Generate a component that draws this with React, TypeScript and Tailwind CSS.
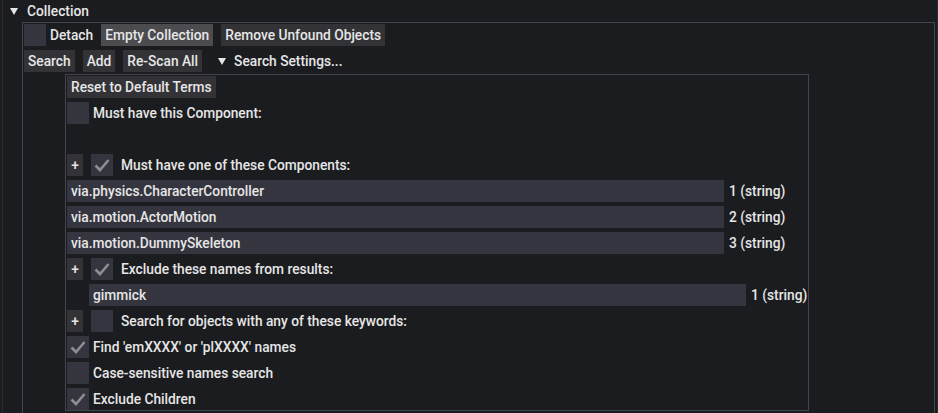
import React from 'react';

const FONT = { fontFamily: 'Roboto, "Noto Sans", "Liberation Sans", sans-serif' };

function Arrow() {
  return (
    <svg width="8" height="7" viewBox="0 0 8 7" className="shrink-0">
      <path d="M0 0 L8 0 L4 7 Z" fill="#e6e6e6" />
    </svg>
  );
}

function Check({ checked }: { checked?: boolean }) {
  return (
    <div className="w-[22px] h-[22px] bg-[#35353f] shrink-0 flex items-center justify-center">
      {checked && (
        <svg width="22" height="22" viewBox="0 0 22 22">
          <path d="M4.5 11.5 L9 16 L17.5 6" fill="none" stroke="#8d8d93" strokeWidth="2.6" />
        </svg>
      )}
    </div>
  );
}

function Btn({ children, active }: { children: React.ReactNode; active?: boolean }) {
  return (
    <div className={`h-[22px] px-[4px] flex items-center shrink-0 whitespace-nowrap ${active ? 'bg-[#4b4b50]' : 'bg-[#333337]'}`}>
      {children}
    </div>
  );
}

function CheckRow({ checked, label }: { checked?: boolean; label: string }) {
  return (
    <div className="flex items-center h-[22px] gap-[4px]">
      <Check checked={checked} />
      <span className="whitespace-nowrap">{label}</span>
    </div>
  );
}

function PlusRow({ checked, label }: { checked?: boolean; label: string }) {
  return (
    <div className="flex items-center h-[22px]">
      <div className="w-[16px] h-[22px] bg-[#333337] flex items-center justify-center">+</div>
      <div className="ml-[8px]"><Check checked={checked} /></div>
      <span className="ml-[8px] whitespace-nowrap">{label}</span>
    </div>
  );
}

function Field({ value, index, indent }: { value: string; index: number; indent?: boolean }) {
  return (
    <div className={`flex items-center h-[22px] ${indent ? 'ml-[22px]' : ''}`}>
      <div className="w-[657px] h-[22px] shrink-0 bg-[#35353f] px-[4px] flex items-center">{value}</div>
      <span className="ml-[5px] whitespace-nowrap">{index} (string)</span>
    </div>
  );
}

export default function App() {
  return (
    <div className="w-[938px] h-[413px] overflow-hidden bg-[#1b1c1f] text-[#e6e6e6] text-[13.75px] leading-[16px] font-medium relative" style={FONT}>
      <div className="absolute left-[2px] top-0 bottom-0 w-px bg-[#2a2a2f]" />
      <div className="absolute right-0 top-0 bottom-0 w-px bg-[#2a2a2f]" />

      {/* header */}
      <div className="h-[22px] flex items-center pl-[10px]">
        <Arrow />
        <span className="ml-[9px]">Collection</span>
      </div>

      {/* outer child */}
      <div className="ml-[22px] w-[913px] h-[400px] border border-[#44444c] p-px">
        <div className="flex items-center gap-[4px] h-[22px]">
          <Check />
          <span>Detach</span>
          <div className="ml-[4px] flex gap-[8px]">
            <Btn active>Empty Collection</Btn>
            <Btn>Remove Unfound Objects</Btn>
          </div>
        </div>
        <div className="flex items-center gap-[8px] h-[22px] mt-[4px]">
          <Btn>Search</Btn>
          <Btn>Add</Btn>
          <Btn>Re-Scan All</Btn>
          <div className="flex items-center ml-[8px]">
            <Arrow />
            <span className="ml-[8px]">Search Settings...</span>
          </div>
        </div>

        {/* inner child */}
        <div className="mt-[2px] ml-[41px] w-[744px] border border-[#44444c] p-px pb-0 flex flex-col gap-[4px]">
          <div className="flex"><Btn>Reset to Default Terms</Btn></div>
          <CheckRow label="Must have this Component:" />
          <div className="h-[22px]" />
          <PlusRow checked label="Must have one of these Components:" />
          <Field value="via.physics.CharacterController" index={1} />
          <Field value="via.motion.ActorMotion" index={2} />
          <Field value="via.motion.DummySkeleton" index={3} />
          <PlusRow checked label="Exclude these names from results:" />
          <Field value="gimmick" index={1} indent />
          <PlusRow label="Search for objects with any of these keywords:" />
          <CheckRow checked label="Find 'emXXXX' or 'plXXXX' names" />
          <CheckRow label="Case-sensitive names search" />
          <CheckRow checked label="Exclude Children" />
        </div>
      </div>
    </div>
  );
}
